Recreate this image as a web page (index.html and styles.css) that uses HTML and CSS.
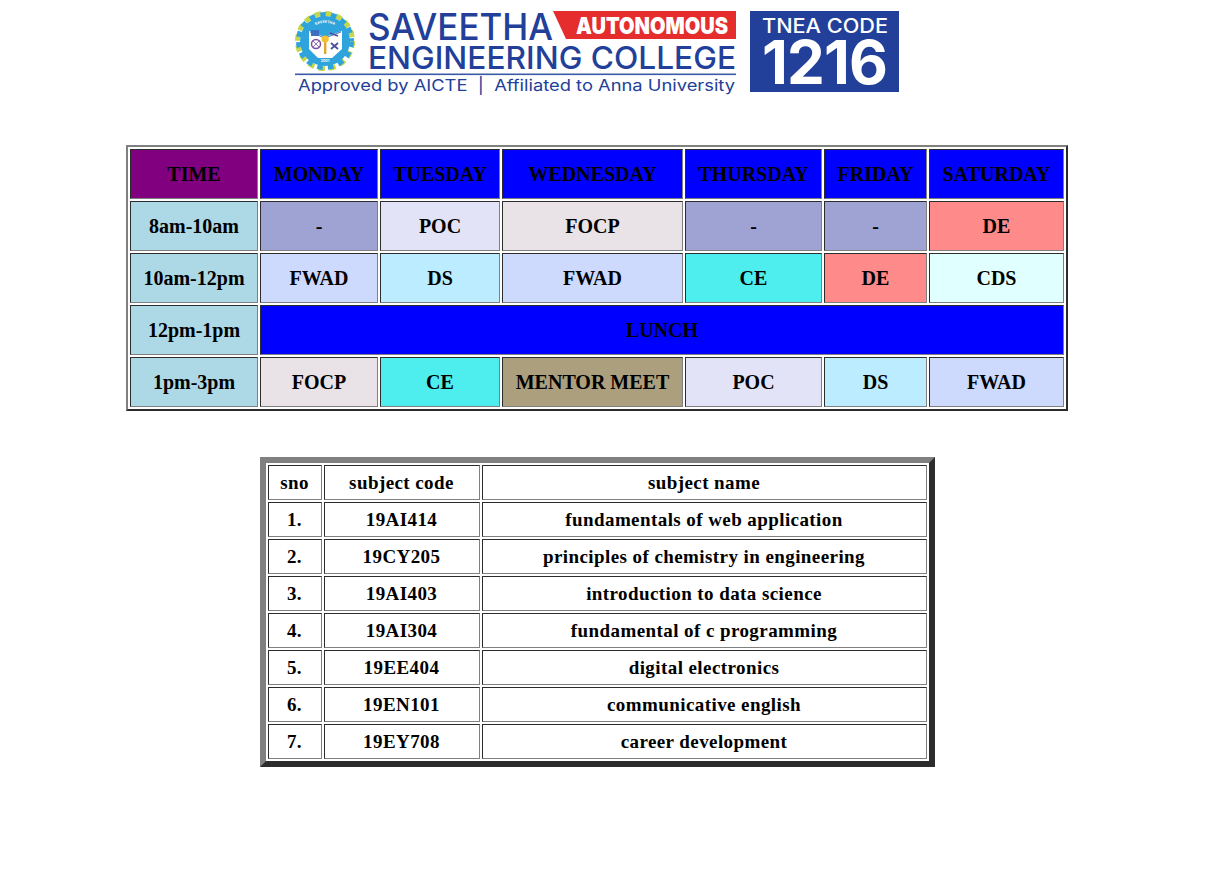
FILE: index.html
```html
<!DOCTYPE html>
<html lang="en">

<head>
    <meta charset="UTF-8">
    <meta name="viewport" content="width=device-width, initial-scale=1">
    <title>Time Table</title>
    <link rel="stylesheet" href="styles.css">
</head>

<body>
    <svg class="logo" viewBox="294 8 606 88" role="img" aria-label="Saveetha Engineering College logo">
        <!-- gear badge -->
        <circle cx="325" cy="41" r="27.5" fill="none" stroke="#c5d64a" stroke-width="5" stroke-dasharray="6.5 4.3"/>
        <circle cx="325" cy="41" r="26.5" fill="none" stroke="#2fa4dc" stroke-width="5" stroke-dasharray="5.5 5.3" stroke-dashoffset="-0.5"/>
        <circle cx="325" cy="41" r="25" fill="#2fa4dc"/>
        <path id="arcTop" d="M306 38 A19.5 19.5 0 0 1 344 38" fill="none"/>
        <text class="logo-tiny" fill="#ffffff"><textPath href="#arcTop" startOffset="50%" text-anchor="middle">SAVEETHA</textPath></text>
        <path d="M309 31 L325 37 L342 31 L342 49 L332 58 L318 58 L309 49 Z" fill="#ffffff"/>
        <path d="M310 32 L325 38 L341 32" fill="none" stroke="#2a4ea0" stroke-width="0.8"/>
        <rect x="311" y="30" width="8" height="6" fill="#3d6fc0"/>
        <circle cx="316" cy="44" r="4.5" fill="none" stroke="#7a4fa8" stroke-width="1.5"/>
        <path d="M313 41 L319 47 M319 41 L313 47" stroke="#7a4fa8" stroke-width="0.8"/>
        <path d="M330 33 L338 36 M331 43 L338 49 M338 43 L331 49" stroke="#4a4fa0" stroke-width="1.8"/>
        <rect x="324" y="42" width="2.4" height="12" fill="#e0a82e"/>
        <circle cx="325.2" cy="39" r="3.6" fill="#f2c230"/>
        <text class="logo-tiny" x="325" y="62" text-anchor="middle" fill="#ffffff">2001</text>

        <!-- college name -->
        <text class="logo-name" x="368" y="39.5" font-size="37" textLength="185" lengthAdjust="spacingAndGlyphs">SAVEETHA</text>
        <polygon points="553,11 736,11 736,39 566,39" fill="#e52d2d"/>
        <text class="logo-auto" x="576" y="33.5" font-size="23" textLength="152" lengthAdjust="spacingAndGlyphs">AUTONOMOUS</text>
        <text class="logo-name" x="368" y="69" font-size="31" textLength="368" lengthAdjust="spacingAndGlyphs">ENGINEERING COLLEGE</text>
        <rect x="295" y="73.5" width="441" height="1.6" fill="#3a5aa8"/>
        <text class="logo-sub" x="298" y="91" font-size="16" textLength="437" lengthAdjust="spacingAndGlyphs">Approved by AICTE  |  Affiliated to Anna University</text>

        <!-- tnea box -->
        <rect x="750" y="11" width="149" height="81" fill="#22409a"/>
        <text class="logo-tnea" x="762" y="33" font-size="19.5" textLength="126" lengthAdjust="spacingAndGlyphs">TNEA CODE</text>
        <text class="logo-code" x="762" y="84" font-size="60" textLength="126" lengthAdjust="spacing">1216</text>
    </svg>

    <table class="timetable">
        <colgroup>
            <col class="c-time"><col class="c-mon"><col class="c-tue"><col class="c-wed"><col class="c-thu"><col class="c-fri"><col class="c-sat">
        </colgroup>
        <tr>
            <th class="time-head">TIME</th>
            <th class="day">MONDAY</th>
            <th class="day">TUESDAY</th>
            <th class="day">WEDNESDAY</th>
            <th class="day">THURSDAY</th>
            <th class="day">FRIDAY</th>
            <th class="day">SATURDAY</th>
        </tr>
        <tr>
            <td class="slot">8am-10am</td>
            <td class="free">-</td>
            <td class="poc">POC</td>
            <td class="focp">FOCP</td>
            <td class="free">-</td>
            <td class="free">-</td>
            <td class="de">DE</td>
        </tr>
        <tr>
            <td class="slot">10am-12pm</td>
            <td class="fwad">FWAD</td>
            <td class="ds">DS</td>
            <td class="fwad">FWAD</td>
            <td class="ce">CE</td>
            <td class="de">DE</td>
            <td class="cds">CDS</td>
        </tr>
        <tr>
            <td class="slot">12pm-1pm</td>
            <td class="day" colspan="6">LUNCH</td>
        </tr>
        <tr>
            <td class="slot">1pm-3pm</td>
            <td class="focp">FOCP</td>
            <td class="ce">CE</td>
            <td class="mentor">MENTOR MEET</td>
            <td class="poc">POC</td>
            <td class="ds">DS</td>
            <td class="fwad">FWAD</td>
        </tr>
    </table>

    <table class="subjects">
        <colgroup>
            <col class="c-sno"><col class="c-code"><col class="c-name">
        </colgroup>
        <tr><th>sno</th><th>subject code</th><th>subject name</th></tr>
        <tr><td>1.</td><td>19AI414</td><td>fundamentals of web application</td></tr>
        <tr><td>2.</td><td>19CY205</td><td>principles of chemistry in engineering</td></tr>
        <tr><td>3.</td><td>19AI403</td><td>introduction to data science</td></tr>
        <tr><td>4.</td><td>19AI304</td><td>fundamental of c programming</td></tr>
        <tr><td>5.</td><td>19EE404</td><td>digital electronics</td></tr>
        <tr><td>6.</td><td>19EN101</td><td>communicative english</td></tr>
        <tr><td>7.</td><td>19EY708</td><td>career development</td></tr>
    </table>
</body>

</html>
```

FILE: styles.css
```css
body {
    margin: 0 40px 0 8px;
    background-color: #ffffff;
    color: #000000;
    font-family: "Liberation Serif", "Times New Roman", serif;
    display: flex;
    flex-direction: column;
    align-items: center;
}

.logo {
    display: block;
    width: 606px;
    height: 88px;
    margin-top: 8px;
}

.logo-name, .logo-sub, .logo-tnea, .logo-auto, .logo-code, .logo-tiny {
    font-family: "Inter", sans-serif;
}

.logo-name, .logo-sub {
    fill: #22409a;
}

.logo-name {
    font-weight: 500;
}

.logo-auto {
    font-weight: 900;
    fill: #ffffff;
}

.logo-sub {
    white-space: pre;
}

.logo-tnea {
    fill: #ffffff;
    font-weight: 500;
}

.logo-code {
    font-weight: 700;
    fill: #ffffff;
}

.logo-tiny {
    font-size: 3.6px;
    font-weight: 700;
}

table {
    border-collapse: separate;
    border-spacing: 2px;
    table-layout: fixed;
    text-align: center;
}

td, th {
    padding: 0;
    font-weight: bold;
    border: 1px inset #808080;
}

.timetable {
    width: 942px;
    margin-top: 49px;
    border: 2px outset #808080;
    font-size: 20px;
}

.timetable tr {
    height: 50px;
}

.c-time { width: 128px; }
.c-mon { width: 118px; }
.c-tue { width: 120px; }
.c-wed { width: 181px; }
.c-thu { width: 137px; }
.c-fri { width: 103px; }
.c-sat { width: 135px; }

.time-head { background-color: #800080; }
.day { background-color: #0000ff; }
.slot { background-color: #add8e6; }
.free { background-color: #9fa3d4; }
.poc { background-color: #e3e3f8; }
.focp { background-color: #e9e3e8; }
.fwad { background-color: #cdd9fd; }
.ds { background-color: #bbecff; }
.ce { background-color: #4eeeee; }
.de { background-color: #ff8a8a; }
.cds { background-color: #e0ffff; }
.mentor { background-color: #ab9f7e; }

.subjects {
    width: 675px;
    margin-top: 46px;
    border: 6px outset #808080;
    font-size: 19px;
    letter-spacing: 0.42px;
}

.subjects tr {
    height: 35px;
}

.subjects td, .subjects th {
    padding-top: 1px;
}

.c-sno { width: 54px; }
.c-code { width: 156px; }
.c-name { width: 445px; }
```
